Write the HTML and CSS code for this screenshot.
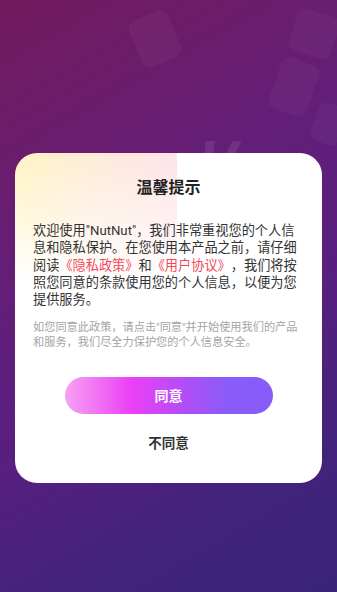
FILE: index.html
```html
<!DOCTYPE html>
<html lang="zh">
<head>
<meta charset="utf-8">
<title>温馨提示</title>
<link rel="stylesheet" href="styles.css">
</head>
<body>
<div class="screen">
  <div class="deco deco-a"></div>
  <div class="deco deco-b"></div>
  <div class="deco deco-c"></div>
  <div class="deco deco-d"></div>
  <div class="spark spark-a"></div>
  <div class="spark spark-b"></div>
  <div class="card">
    <h1 class="title">温馨提示</h1>
    <p class="body">欢迎使用"NutNut"，我们非常重视您的个人信息和隐私保护。在您使用本产品之前，请仔细阅读<span class="link">《隐私政策》</span>和<span class="link">《用户协议》</span>，我们将按照您同意的条款使用您的个人信息，以便为您提供服务。</p>
    <p class="note">如您同意此政策，请点击"同意"并开始使用我们的产品和服务，我们尽全力保护您的个人信息安全。</p>
    <button class="agree">同意</button>
    <button class="disagree">不同意</button>
  </div>
</div>
</body>
</html>
```

FILE: styles.css
```css
* { box-sizing: border-box; }
html, body { margin: 0; padding: 0; }
body {
  font-family: Roboto, "Noto Sans CJK SC", sans-serif;
  text-spacing-trim: space-all;
}
.screen {
  position: relative;
  width: 337px;
  height: 592px;
  overflow: hidden;
  padding: 153px 15px 0;
  background: linear-gradient(150deg, #721b5d 0%, #641e78 36%, #571f80 60%, #41237c 82%, #392479 100%);
}
.deco {
  position: absolute;
  width: 42px;
  height: 50px;
  border-radius: 9px;
  background: rgba(255,255,255,0.035);
  transform: rotate(-22deg);
}
.deco-a { left: 134px; top: 14px; }
.deco-b { left: 292px; top: 12px; width: 44px; height: 44px; transform: rotate(18deg); }
.deco-c { left: 274px; top: 60px; width: 40px; height: 54px; transform: rotate(20deg); }
.deco-d { left: 314px; top: 104px; width: 30px; height: 40px; transform: rotate(20deg); }
.spark {
  position: absolute;
  top: 141px;
  width: 9px;
  height: 14px;
  background: rgba(255,255,255,0.09);
}
.spark-a { left: 205px; transform: skewX(-6deg); }
.spark-b { left: 229px; transform: skewX(-20deg) rotate(10deg); }
.card {
  position: relative;
  width: 307px;
  border-radius: 22px;
  padding: 24px 18px 30px 18px;
  display: flex;
  flex-direction: column;
  align-items: stretch;
  background:
    linear-gradient(to bottom, rgba(255,255,255,0) 0%, rgba(255,255,255,0.4) 45%, #fff 100%) 0 0 / 162px 130px no-repeat,
    linear-gradient(to right, #fff4c2 0%, #fee9dc 60%, #fde3e8 100%) 0 0 / 162px 130px no-repeat,
    #fff;
}
.title {
  margin: 0;
  text-align: center;
  font-size: 16px;
  line-height: 22px;
  font-weight: 700;
  color: #222;
}
.body {
  margin: 23px 0 0;
  font-size: 13.2px;
  line-height: 17.3px;
  color: #333;
}
.link { color: #f4485b; }
.note {
  margin: 13px 0 0;
  font-size: 11.2px;
  line-height: 14.4px;
  color: #a4a4a4;
}
.agree {
  align-self: center;
  margin-top: 26.5px;
  width: 208px;
  height: 37px;
  border: 0;
  border-radius: 19px;
  font-family: inherit;
  font-size: 14px;
  font-weight: 700;
  color: #fff;
  background: linear-gradient(to right, #f6a2f2 0%, #ec3ff6 32%, #b04ef6 58%, #8a5bf9 78%, #875cf9 100%);
}
.disagree {
  align-self: center;
  margin-top: 19px;
  border: 0;
  padding: 0;
  background: none;
  font-family: inherit;
  font-size: 13.5px;
  line-height: 20px;
  font-weight: 700;
  color: #333;
}
```
